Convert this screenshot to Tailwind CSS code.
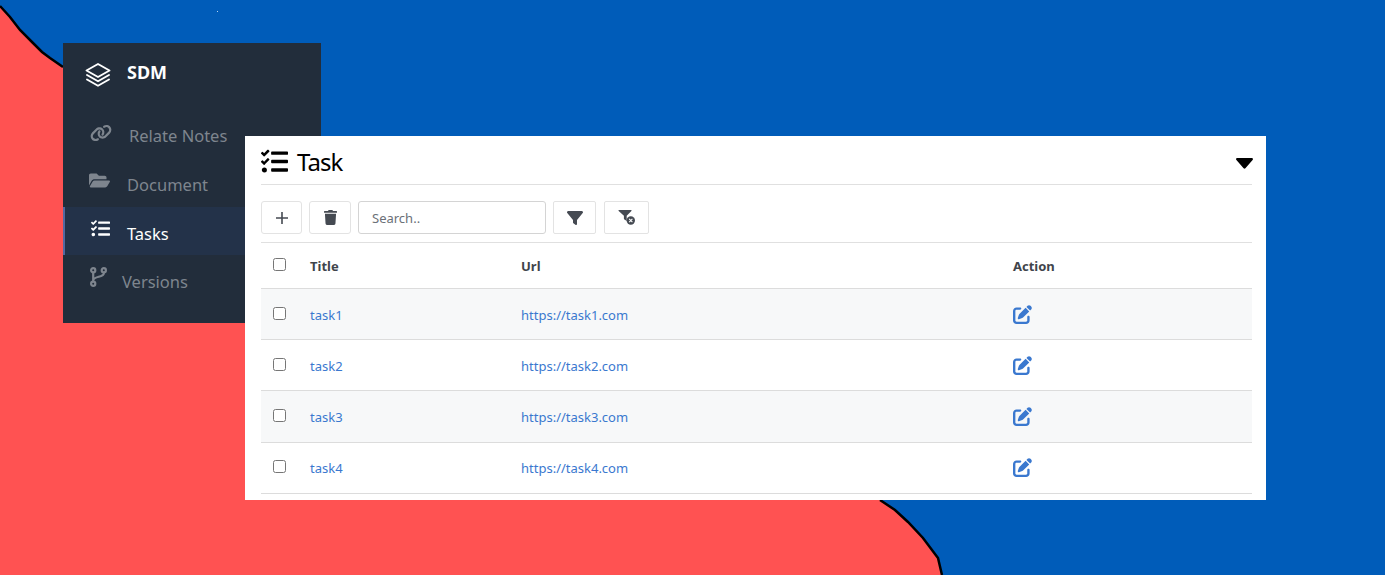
<!DOCTYPE html>
<html lang="en">
<head>
<meta charset="utf-8">
<title>SDM Task</title>
<script src="https://cdn.jsdelivr.net/npm/@tailwindcss/browser@4"></script>
</head>
<body class="m-0 overflow-hidden font-['Noto_Sans',sans-serif]">
<main class="relative w-[1385px] h-[575px] overflow-hidden bg-[#005cb9]">
  <svg class="absolute left-0 top-0 w-[1385px] h-[575px]" viewBox="0 0 1385 575">
    <path d="M0 6 L10 17 L20 30 L33 43 L42 52 L50 58 L63 67 L880 500 L895 510 L908 522 L923 538 L938 558 L942 575 L0 575 Z" fill="#ff5252"/>
    <path d="M0 6 L10 17 L20 30 L33 43 L42 52 L50 58 L63 67 M880 500 L895 510 L908 522 L923 538 L938 558 L942 575" fill="none" stroke="#000" stroke-width="2.5"/>
    <rect x="217" y="11" width="1" height="1" fill="#b8d4f0"/>
  </svg>

  <aside class="absolute left-[63px] top-[43px] w-[258px] h-[280px] bg-[#222d3b] text-[#7e858e]">
    <div class="flex items-center h-[68px] pl-[22px] pb-[8px]">
      <svg class="w-[26px] h-[26px] mt-[4px]" viewBox="0 0 26 26" fill="none" stroke="#fff" stroke-width="1.9" stroke-linejoin="round" stroke-linecap="round"><path d="M13 2 L24.5 8.5 L13 15 L1.5 8.5 Z"/><path d="M2 13 L13 19.3 L24 13"/><path d="M2 17.5 L13 23.8 L24 17.5"/></svg>
      <span class="ml-[16px] text-[18px] font-bold text-white leading-none -mt-[2px]">SDM</span>
    </div>
    <nav class="text-[16.5px]">
      <a class="flex items-center h-[48px] pl-[27px]">
        <svg class="w-[22px] h-[18px] -mt-[5px]" viewBox="0 0 640 512" fill="currentColor"><path d="M579.8 267.7c56.5-56.5 56.5-148 0-204.5c-50-50-128.8-56.5-186.3-15.4l-1.6 1.1c-14.4 10.3-17.7 30.3-7.4 44.6s30.3 17.7 44.6 7.4l1.6-1.1c32.1-22.9 76-19.3 103.8 8.6c31.5 31.5 31.5 82.5 0 114L422.3 334.8c-31.5 31.5-82.5 31.5-114 0c-27.9-27.9-31.5-71.8-8.6-103.8l1.1-1.6c10.3-14.4 6.9-34.4-7.4-44.6s-34.4-6.9-44.6 7.4l-1.1 1.6C206.5 251.2 213 330 263 380c56.5 56.5 148 56.5 204.5 0L579.8 267.7zM60.2 244.3c-56.5 56.5-56.5 148 0 204.5c50 50 128.8 56.5 186.3 15.4l1.6-1.1c14.4-10.3 17.7-30.3 7.4-44.6s-30.3-17.7-44.6-7.4l-1.6 1.1c-32.1 22.9-76 19.3-103.8-8.6C74 372 74 321 105.5 289.5L217.7 177.2c31.5-31.5 82.5-31.5 114 0c27.9 27.9 31.5 71.8 8.6 103.9l-1.1 1.6c-10.3 14.4-6.9 34.4 7.4 44.6s34.4 6.9 44.6-7.4l1.1-1.6C433.5 260.8 427 182 377 132c-56.5-56.5-148-56.5-204.5 0L60.2 244.3z"/></svg>
        <span class="ml-[17px] pt-[2px]">Relate Notes</span>
      </a>
      <a class="flex items-center h-[48px] pl-[26px]">
        <svg class="w-[21px] h-[19px] -mt-[5px]" viewBox="0 0 576 512" fill="currentColor"><path d="M572.694 292.093L500.27 416.248A63.997 63.997 0 0 1 444.989 448H45.025c-18.523 0-30.064-20.093-20.731-36.093l72.424-124.155A64 64 0 0 1 152 256h399.964c18.523 0 30.064 20.093 20.73 36.093zM152 224h328v-48c0-26.51-21.49-48-48-48H272l-64-64H48C21.49 64 0 85.49 0 112v278.046l69.077-118.418C86.214 242.25 117.989 224 152 224z"/></svg>
        <span class="ml-[17px] pt-[4px]">Document</span>
      </a>
      <a class="flex items-center h-[48px] pl-[26px] border-l-2 border-[#5468a0] bg-[#233249] text-white">
        <svg class="w-[19px] h-[19px] -mt-[5px]" viewBox="0 0 512 512" fill="currentColor"><path d="M139.61 35.5a12 12 0 0 0-17 0L58.93 98.81l-22.7-22.12a12 12 0 0 0-17 0L3.53 92.41a12 12 0 0 0 0 17l47.59 47.4a12.78 12.78 0 0 0 17.61 0l15.59-15.62L156.52 69a12.09 12.09 0 0 0 .09-17zm0 159.19a12 12 0 0 0-17 0l-63.68 63.72-22.7-22.1a12 12 0 0 0-17 0L3.53 252a12 12 0 0 0 0 17L51 316.5a12.77 12.77 0 0 0 17.6 0l15.7-15.69 72.2-72.22a12 12 0 0 0 .09-16.9zM64 368c-26.49 0-48.59 21.5-48.59 48S37.53 464 64 464a48 48 0 0 0 0-96zm432 16H208a16 16 0 0 0-16 16v32a16 16 0 0 0 16 16h288a16 16 0 0 0 16-16v-32a16 16 0 0 0-16-16zm0-320H208a16 16 0 0 0-16 16v32a16 16 0 0 0 16 16h288a16 16 0 0 0 16-16V80a16 16 0 0 0-16-16zm0 160H208a16 16 0 0 0-16 16v32a16 16 0 0 0 16 16h288a16 16 0 0 0 16-16v-32a16 16 0 0 0-16-16z"/></svg>
        <span class="ml-[17px] pt-[6px]">Tasks</span>
      </a>
      <a class="flex items-center h-[48px] pl-[27px]">
        <svg class="w-[17px] h-[20px] -mt-[5px]" viewBox="0 0 17 20" fill="none" stroke="currentColor" stroke-width="2.2"><circle cx="3.2" cy="3.2" r="2.1"/><circle cx="3.2" cy="16.8" r="2.1"/><circle cx="13.8" cy="3.2" r="2.1"/><path d="M3.2 5.3 V14.7 M13.8 5.3 V6.5 C13.8 10.5 3.2 9 3.2 13.5"/></svg>
        <span class="ml-[15px] pt-[6px]">Versions</span>
      </a>
    </nav>
  </aside>

  <section class="absolute left-[245px] top-[136px] w-[1021px] h-[364px] bg-white pl-[16px] pr-[14px]">
    <header class="flex items-center justify-between h-[49px] pt-[6px] border-b border-[#e0e0e0]">
      <div class="flex items-center text-black">
        <svg class="w-[27px] h-[27px] -mt-[3px]" viewBox="0 0 512 512" fill="currentColor"><path d="M139.61 35.5a12 12 0 0 0-17 0L58.93 98.81l-22.7-22.12a12 12 0 0 0-17 0L3.53 92.41a12 12 0 0 0 0 17l47.59 47.4a12.78 12.78 0 0 0 17.61 0l15.59-15.62L156.52 69a12.09 12.09 0 0 0 .09-17zm0 159.19a12 12 0 0 0-17 0l-63.68 63.72-22.7-22.1a12 12 0 0 0-17 0L3.53 252a12 12 0 0 0 0 17L51 316.5a12.77 12.77 0 0 0 17.6 0l15.7-15.69 72.2-72.22a12 12 0 0 0 .09-16.9zM64 368c-26.49 0-48.59 21.5-48.59 48S37.53 464 64 464a48 48 0 0 0 0-96zm432 16H208a16 16 0 0 0-16 16v32a16 16 0 0 0 16 16h288a16 16 0 0 0 16-16v-32a16 16 0 0 0-16-16zm0-320H208a16 16 0 0 0-16 16v32a16 16 0 0 0 16 16h288a16 16 0 0 0 16-16V80a16 16 0 0 0-16-16zm0 160H208a16 16 0 0 0-16 16v32a16 16 0 0 0 16 16h288a16 16 0 0 0 16-16v-32a16 16 0 0 0-16-16z"/></svg>
        <h1 class="ml-[9px] text-[24px] tracking-[-1px] leading-none font-normal -mt-[2px]">Task</h1>
      </div>
      <svg class="w-[17px] h-[11px] -mr-[1px]" viewBox="0 0 17 11" fill="#000"><path d="M1.3 0 H15.7 C16.8 0 17.3 1.2 16.6 2 L9.4 10.2 C8.9 10.8 8.1 10.8 7.6 10.2 L.4 2 C-.3 1.2 .2 0 1.3 0 Z"/></svg>
    </header>

    <div class="flex items-center h-[58px] pt-[8px] border-b border-[#e0e0e0] text-[#454a52]">
      <button class="flex items-center justify-center w-[41px] h-[33px] border border-[#e3e3e3] rounded-[3px] bg-white">
        <svg class="w-[12px] h-[12px]" viewBox="0 0 12 12" stroke="currentColor" stroke-width="1.6"><path d="M6 0 V12 M0 6 H12"/></svg>
      </button>
      <button class="flex items-center justify-center ml-[7px] w-[42px] h-[33px] border border-[#e3e3e3] rounded-[3px] bg-white">
        <svg class="w-[13px] h-[15px]" viewBox="0 0 448 512" fill="currentColor"><path d="M432 32H312l-9.4-18.7A24 24 0 0 0 281.1 0H166.8a23.72 23.72 0 0 0-21.4 13.3L136 32H16A16 16 0 0 0 0 48v32a16 16 0 0 0 16 16h416a16 16 0 0 0 16-16V48a16 16 0 0 0-16-16zM53.2 467a48 48 0 0 0 47.9 45h245.8a48 48 0 0 0 47.9-45L416 128H32z"/></svg>
      </button>
      <input class="ml-[7px] w-[188px] h-[33px] border border-[#d4d4d4] rounded-[3px] pl-[13px] text-[13px] placeholder:text-[#6b7078] outline-none" placeholder="Search..">
      <button class="flex items-center justify-center ml-[7px] w-[43px] h-[33px] border border-[#e3e3e3] rounded-[2px] bg-white">
        <svg class="w-[16px] h-[16px]" viewBox="0 0 512 512" fill="currentColor"><path d="M3.9 54.9C10.5 40.9 24.5 32 40 32H472c15.5 0 29.5 8.9 36.1 22.9s4.6 30.5-5.2 42.5L320 320.9V448c0 12.1-6.8 23.2-17.7 28.6s-23.8 4.3-33.5-3l-64-48c-8.1-6-12.8-15.5-12.8-25.6V320.9L9 97.3C-.7 85.4-2.8 68.8 3.9 54.9z"/></svg>
      </button>
      <button class="flex items-center justify-center ml-[8px] w-[45px] h-[33px] border border-[#e3e3e3] rounded-[2px] bg-white">
        <svg class="w-[18px] h-[15px]" viewBox="0 0 17 15"><path d="M0.6 0 H12.4 C13 0 13.3 .7 12.9 1.1 L8.2 5.8 V11 L6 9.5 C5.6 9.2 5.4 8.9 5.4 8.4 V5.8 L.2 1.1 C-.2 .7 0 0 .6 0 Z" fill="currentColor"/><circle cx="12.3" cy="10.5" r="4.2" fill="currentColor"/><path d="M10.7 8.9 L13.9 12.1 M13.9 8.9 L10.7 12.1" stroke="#fff" stroke-width="1.1"/></svg>
      </button>
    </div>

    <table class="w-[991px] table-fixed border-collapse text-[13px]">
      <colgroup><col class="w-[37px]"><col class="w-[211px]"><col class="w-[492px]"><col></colgroup>
      <thead class="text-[#3f444b]">
        <tr class="h-[45px] border-b border-[#dcdcdc]">
          <th class="pl-[12px] p-0 text-left"><input type="checkbox" class="block w-[13px] h-[13px] -mt-[1px]"></th>
          <th class="px-[12px] pt-[3px] text-left font-bold">Title</th>
          <th class="px-[12px] pt-[3px] text-left font-bold">Url</th>
          <th class="px-[12px] pt-[3px] text-left font-bold">Action</th>
        </tr>
      </thead>
      <tbody class="text-[#3a78cf]">
        <tr class="h-[51px] border-b border-[#dcdcdc] bg-[#f7f8f9]">
          <td class="pl-[12px] p-0"><input type="checkbox" class="block w-[13px] h-[13px] -mt-[1px]"></td>
          <td class="px-[12px] pt-[4px]">task1</td><td class="px-[12px] pt-[4px]">https://task1.com</td>
          <td class="px-[12px] pt-[4px]"><svg class="w-[19px] h-[19px] block -mt-[3px]" viewBox="0 0 512 512" fill="currentColor"><path d="M471.6 21.7c-21.9-21.9-57.3-21.9-79.2 0L362.3 51.7l97.9 97.9 30.1-30.1c21.9-21.9 21.9-57.3 0-79.2L471.6 21.7zm-299.2 220c-6.1 6.1-10.8 13.6-13.5 21.9l-29.6 88.8c-2.9 8.6-.6 18.1 5.8 24.6s15.9 8.7 24.6 5.8l88.8-29.6c8.2-2.7 15.7-7.4 21.9-13.5L437.7 172.3 339.7 74.3 172.4 241.7zM96 64C43 64 0 107 0 160V416c0 53 43 96 96 96H352c53 0 96-43 96-96V320c0-17.7-14.3-32-32-32s-32 14.3-32 32v96c0 17.7-14.3 32-32 32H96c-17.7 0-32-14.3-32-32V160c0-17.7 14.3-32 32-32h96c17.7 0 32-14.3 32-32s-14.3-32-32-32H96z"/></svg></td>
        </tr>
        <tr class="h-[51px] border-b border-[#dcdcdc]">
          <td class="pl-[12px] p-0"><input type="checkbox" class="block w-[13px] h-[13px] -mt-[1px]"></td>
          <td class="px-[12px] pt-[4px]">task2</td><td class="px-[12px] pt-[4px]">https://task2.com</td>
          <td class="px-[12px] pt-[4px]"><svg class="w-[19px] h-[19px] block -mt-[3px]" viewBox="0 0 512 512" fill="currentColor"><path d="M471.6 21.7c-21.9-21.9-57.3-21.9-79.2 0L362.3 51.7l97.9 97.9 30.1-30.1c21.9-21.9 21.9-57.3 0-79.2L471.6 21.7zm-299.2 220c-6.1 6.1-10.8 13.6-13.5 21.9l-29.6 88.8c-2.9 8.6-.6 18.1 5.8 24.6s15.9 8.7 24.6 5.8l88.8-29.6c8.2-2.7 15.7-7.4 21.9-13.5L437.7 172.3 339.7 74.3 172.4 241.7zM96 64C43 64 0 107 0 160V416c0 53 43 96 96 96H352c53 0 96-43 96-96V320c0-17.7-14.3-32-32-32s-32 14.3-32 32v96c0 17.7-14.3 32-32 32H96c-17.7 0-32-14.3-32-32V160c0-17.7 14.3-32 32-32h96c17.7 0 32-14.3 32-32s-14.3-32-32-32H96z"/></svg></td>
        </tr>
        <tr class="h-[52px] border-b border-[#dcdcdc] bg-[#f7f8f9]">
          <td class="pl-[12px] p-0"><input type="checkbox" class="block w-[13px] h-[13px] -mt-[2px]"></td>
          <td class="px-[12px] pt-[3px]">task3</td><td class="px-[12px] pt-[3px]">https://task3.com</td>
          <td class="px-[12px] pt-[3px]"><svg class="w-[19px] h-[19px] block -mt-[3px]" viewBox="0 0 512 512" fill="currentColor"><path d="M471.6 21.7c-21.9-21.9-57.3-21.9-79.2 0L362.3 51.7l97.9 97.9 30.1-30.1c21.9-21.9 21.9-57.3 0-79.2L471.6 21.7zm-299.2 220c-6.1 6.1-10.8 13.6-13.5 21.9l-29.6 88.8c-2.9 8.6-.6 18.1 5.8 24.6s15.9 8.7 24.6 5.8l88.8-29.6c8.2-2.7 15.7-7.4 21.9-13.5L437.7 172.3 339.7 74.3 172.4 241.7zM96 64C43 64 0 107 0 160V416c0 53 43 96 96 96H352c53 0 96-43 96-96V320c0-17.7-14.3-32-32-32s-32 14.3-32 32v96c0 17.7-14.3 32-32 32H96c-17.7 0-32-14.3-32-32V160c0-17.7 14.3-32 32-32h96c17.7 0 32-14.3 32-32s-14.3-32-32-32H96z"/></svg></td>
        </tr>
        <tr class="h-[51px] border-b border-[#dcdcdc]">
          <td class="pl-[12px] p-0"><input type="checkbox" class="block w-[13px] h-[13px] -mt-[3px]"></td>
          <td class="px-[12px] pt-[3px]">task4</td><td class="px-[12px] pt-[3px]">https://task4.com</td>
          <td class="px-[12px] pt-[3px]"><svg class="w-[19px] h-[19px] block -mt-[3px]" viewBox="0 0 512 512" fill="currentColor"><path d="M471.6 21.7c-21.9-21.9-57.3-21.9-79.2 0L362.3 51.7l97.9 97.9 30.1-30.1c21.9-21.9 21.9-57.3 0-79.2L471.6 21.7zm-299.2 220c-6.1 6.1-10.8 13.6-13.5 21.9l-29.6 88.8c-2.9 8.6-.6 18.1 5.8 24.6s15.9 8.7 24.6 5.8l88.8-29.6c8.2-2.7 15.7-7.4 21.9-13.5L437.7 172.3 339.7 74.3 172.4 241.7zM96 64C43 64 0 107 0 160V416c0 53 43 96 96 96H352c53 0 96-43 96-96V320c0-17.7-14.3-32-32-32s-32 14.3-32 32v96c0 17.7-14.3 32-32 32H96c-17.7 0-32-14.3-32-32V160c0-17.7 14.3-32 32-32h96c17.7 0 32-14.3 32-32s-14.3-32-32-32H96z"/></svg></td>
        </tr>
      </tbody>
    </table>
  </section>
</main>
</body>
</html>
